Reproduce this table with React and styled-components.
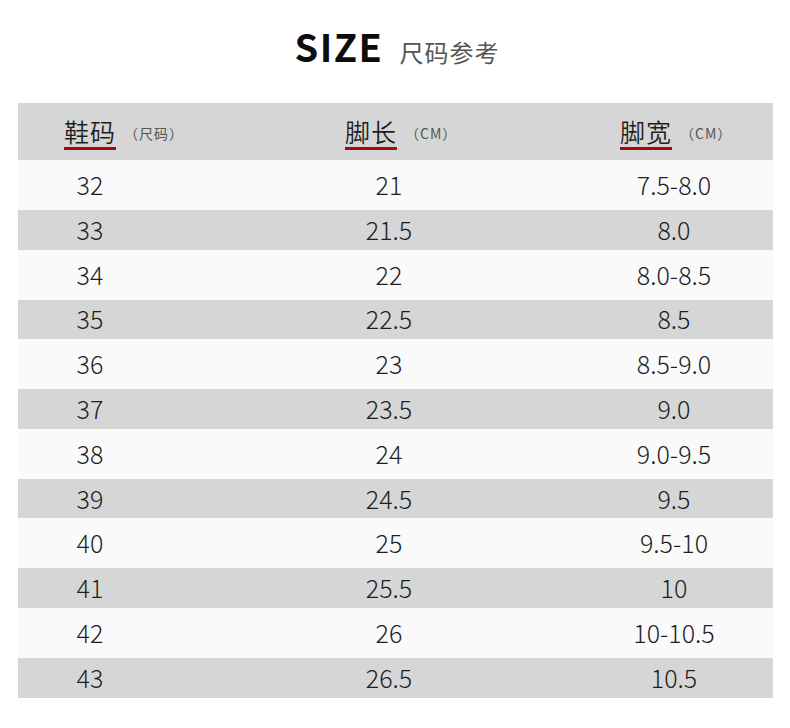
import React from "react";
import styled, { createGlobalStyle } from "styled-components";

const GlobalStyle = createGlobalStyle`
  body {
    margin: 0;
    background: #ffffff;
    font-family: "Noto Sans CJK SC", "Noto Sans", sans-serif;
  }
`;

const Page = styled.div`
  width: 790px;
  height: 728px;
  background: #ffffff;
  overflow: hidden;
`;

const TitleBar = styled.div`
  display: flex;
  justify-content: center;
  align-items: baseline;
  gap: 16px;
  padding-top: 27px;
  height: 103px;
  box-sizing: border-box;
  padding-left: 4px;
`;

const TitleEn = styled.h1`
  margin: 0;
  font-size: 38px;
  font-weight: 700;
  letter-spacing: 1.5px;
  color: #0d0d0d;
  line-height: 1;
`;

const TitleCn = styled.span`
  font-size: 24px;
  color: #555555;
  letter-spacing: 1px;
`;

const Table = styled.div`
  margin: 0 17px 0 18px;
`;

const HeadRow = styled.div`
  display: grid;
  grid-template-columns: 281px 275px auto;
  align-items: center;
  height: 57px;
  padding-left: 46px;
  background: #d6d6d6;
`;

const HeadCell = styled.div`
  display: flex;
  align-items: center;
  gap: ${(p) => p.$gap}px;
  padding-top: 2px;
`;

const HeadName = styled.span`
  font-size: 25px;
  font-weight: 350;
  color: #1e1e1e;
  line-height: 32px;
  letter-spacing: 1px;
  border-bottom: 3px solid #a00c0c;
`;

const HeadUnit = styled.span`
  font-size: 14px;
  color: #555555;
  letter-spacing: 1px;
`;

const Row = styled.div`
  display: grid;
  grid-template-columns: 144px 454px 116px 1fr;
  align-items: center;
  height: ${(p) => (p.$alt ? 39.6 : 50)}px;
  background: ${(p) => (p.$alt ? "#d6d6d6" : "#fafafa")};
`;

const Cell = styled.div`
  text-align: center;
  font-size: 25px;
  font-weight: 300;
  color: #1e1e1e;
  margin-top: -2px;
`;

const sizes = [
  ["32", "21", "7.5-8.0"],
  ["33", "21.5", "8.0"],
  ["34", "22", "8.0-8.5"],
  ["35", "22.5", "8.5"],
  ["36", "23", "8.5-9.0"],
  ["37", "23.5", "9.0"],
  ["38", "24", "9.0-9.5"],
  ["39", "24.5", "9.5"],
  ["40", "25", "9.5-10"],
  ["41", "25.5", "10"],
  ["42", "26", "10-10.5"],
  ["43", "26.5", "10.5"],
];

const App = () => {
  return (
    <Page>
      <GlobalStyle />
      <TitleBar>
        <TitleEn>SIZE</TitleEn>
        <TitleCn>尺码参考</TitleCn>
      </TitleBar>
      <Table>
        <HeadRow>
          <HeadCell $gap={8}>
            <HeadName>鞋码</HeadName>
            <HeadUnit>（尺码）</HeadUnit>
          </HeadCell>
          <HeadCell $gap={8}>
            <HeadName>脚长</HeadName>
            <HeadUnit>（CM）</HeadUnit>
          </HeadCell>
          <HeadCell $gap={8}>
            <HeadName>脚宽</HeadName>
            <HeadUnit>（CM）</HeadUnit>
          </HeadCell>
        </HeadRow>
        {sizes.map(([code, length, width], i) => (
          <Row key={code} $alt={i % 2 === 1}>
            <Cell>{code}</Cell>
            <Cell>{length}</Cell>
            <Cell>{width}</Cell>
          </Row>
        ))}
      </Table>
    </Page>
  );
};

export default App;
